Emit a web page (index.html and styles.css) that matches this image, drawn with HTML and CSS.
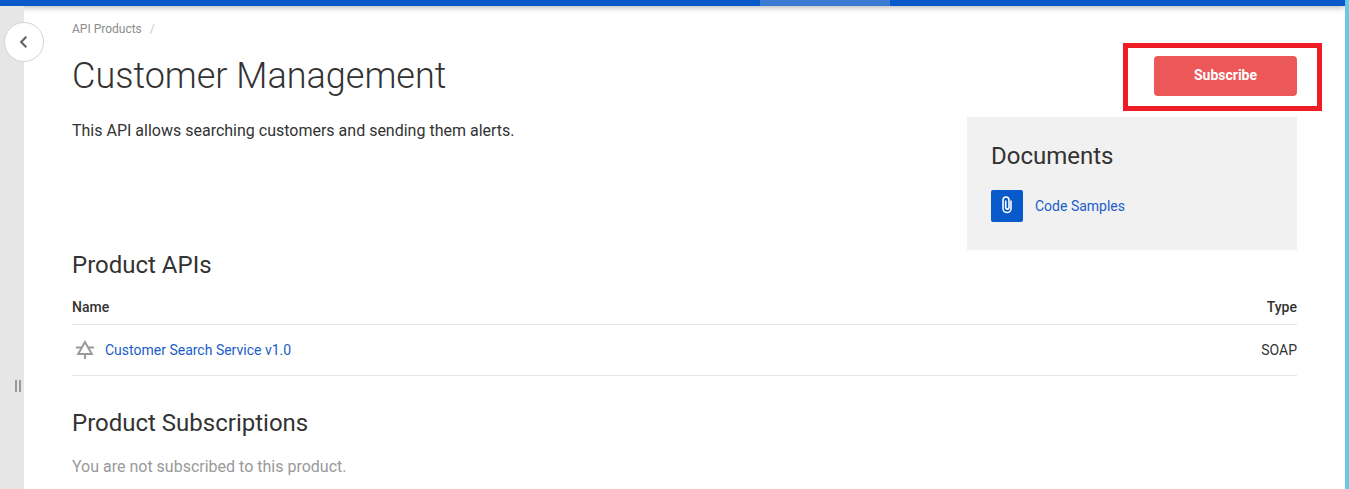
FILE: index.html
```html
<!DOCTYPE html>
<html lang="en">
<head>
    <meta charset="UTF-8">
    <meta name="viewport" content="width=device-width, initial-scale=1.0">
    <title>Customer Management</title>
    <link rel="stylesheet" href="styles.css">
</head>
<body>
    <header class="topbar">
        <div class="topbar-active"></div>
    </header>

    <div class="layout">
        <aside class="sidebar">
            <button class="sidebar-toggle" type="button" aria-label="Expand sidebar">
                <svg width="24" height="24" viewBox="0 0 24 24">
                    <path d="M14.3 6.8 L9.2 12 L14.3 17.2" fill="none" stroke="#666" stroke-width="2.2"/>
                </svg>
            </button>
            <div class="sidebar-grip"></div>
        </aside>

        <main class="content">
            <nav class="breadcrumb">
                <a href="#">API Products</a>
                <span class="separator">/</span>
            </nav>

            <div class="title-row">
                <h1>Customer Management</h1>
                <div class="subscribe">
                    <button class="subscribe-button" type="button">Subscribe</button>
                    <div class="highlight"></div>
                </div>
            </div>

            <div class="overview">
                <p class="description">This API allows searching customers and sending them alerts.</p>
                <section class="documents">
                    <h2>Documents</h2>
                    <a class="document" href="#">
                        <span class="document-icon">
                            <svg width="20" height="20" viewBox="0 0 20 20">
                                <path d="M14 5.500 V13.500 A4 4 0 0 1 6 13.500 V5 A3 3 0 0 1 12 5 V12.800 A1.700 1.700 0 0 1 8.700 12.800 V5.500" fill="none" stroke="#fff" stroke-width="1.600"/>
                            </svg>
                        </span>
                        Code Samples
                    </a>
                </section>
            </div>

            <section class="apis">
                <h2>Product APIs</h2>
                <table>
                    <thead>
                        <tr>
                            <th>Name</th>
                            <th class="type">Type</th>
                        </tr>
                    </thead>
                    <tbody>
                        <tr>
                            <td>
                                <a class="api-link" href="#">
                                    <svg width="20" height="20" viewBox="0 0 20 20" fill="none" stroke="#999" stroke-width="2">
                                        <path d="M10 2 L16.800 14 H3.200 Z"/>
                                        <path d="M1 7.500 H6.500 M13.500 7.500 H19 M10 14 V19"/>
                                    </svg>
                                    Customer Search Service v1.0
                                </a>
                            </td>
                            <td class="type">SOAP</td>
                        </tr>
                    </tbody>
                </table>
            </section>

            <section class="subscriptions">
                <h2>Product Subscriptions</h2>
                <p class="empty">You are not subscribed to this product.</p>
            </section>
        </main>
    </div>
</body>
</html>
```
FILE: styles.css
```css
:root {
    --primary-color: #0859c9;
    --link-color: #1a5dc8;
    --text-color: #333;
    --muted-color: #999;
    --line-color: #e6e6e6;
}

* {
    margin: 0;
    padding: 0;
    box-sizing: border-box;
}

body {
    display: flex;
    flex-direction: column;
    min-height: 100vh;
    border-right: 4px solid #66c9ea;
    background-color: #fff;
    color: var(--text-color);
    font-family: Roboto, sans-serif;
    font-size: 14px;
    line-height: 20px;
}

a {
    color: var(--link-color);
    text-decoration: none;
}

.topbar {
    position: relative;
    height: 6px;
    background-color: var(--primary-color);
    box-shadow: 0 1px 6px rgba(0, 0, 0, 0.35);
    display: flex;
    justify-content: center;
}

.topbar-active {
    width: 130px;
    margin-left: 305px;
    background-color: #3a7bd3;
}

.layout {
    display: flex;
    flex: 1;
}

.sidebar {
    position: relative;
    flex: 0 0 24px;
    background-color: #e6e6e6;
}

.sidebar-toggle {
    position: absolute;
    top: 16px;
    left: 4px;
    display: flex;
    align-items: center;
    justify-content: center;
    width: 40px;
    height: 40px;
    border: 1px solid #d4d4d4;
    border-radius: 50%;
    background-color: #fff;
    cursor: pointer;
}

.sidebar-grip {
    position: absolute;
    top: 374px;
    right: 3px;
    width: 6px;
    height: 12px;
    border: solid var(--muted-color);
    border-width: 0 2px;
}

.content {
    flex: 1;
    padding: 13px 48px 0;
}

.breadcrumb {
    display: flex;
    gap: 8px;
    font-size: 12px;
}

.breadcrumb a {
    color: #8c8c8c;
}

.separator {
    color: #ccc;
}

.title-row {
    display: flex;
    align-items: center;
    justify-content: space-between;
    height: 74px;
}

h1 {
    font-size: 36px;
    font-weight: 300;
    line-height: 48px;
}

h2 {
    font-size: 24px;
    font-weight: 400;
    line-height: 30px;
}

.subscribe {
    position: relative;
}

.subscribe-button {
    width: 143px;
    height: 40px;
    padding-bottom: 2px;
    border: none;
    border-radius: 4px;
    background-color: #ec5858;
    color: #fff;
    font-family: inherit;
    font-size: 14px;
    font-weight: 700;
    cursor: pointer;
}

.highlight {
    position: absolute;
    top: -13px;
    right: -25px;
    bottom: -15px;
    left: -31px;
    border: 5px solid #ee1c24;
    pointer-events: none;
}

.overview {
    display: flex;
    justify-content: space-between;
    margin-top: 4px;
}

.description {
    padding-top: 4px;
    font-size: 16px;
}

.documents {
    width: 330px;
    padding: 24px 24px 28px;
    background-color: #f1f1f1;
}

.document {
    display: flex;
    align-items: center;
    gap: 12px;
    margin-top: 19px;
}

.document-icon {
    display: flex;
    align-items: center;
    justify-content: center;
    width: 32px;
    height: 32px;
    padding-bottom: 2px;
    border-radius: 2px;
    background-color: var(--primary-color);
}

table {
    width: 100%;
    margin-top: 12px;
    border-collapse: collapse;
}

th {
    padding: 5px 0 7px;
    font-weight: 500;
    text-align: left;
}

td {
    padding: 15px 0;
}

th,
td {
    border-bottom: 1px solid var(--line-color);
}

.type {
    text-align: right;
}

.api-link {
    display: flex;
    align-items: center;
    gap: 10px;
    margin-left: 3px;
}

.subscriptions {
    margin-top: 32px;
}

.empty {
    margin-top: 19px;
    color: var(--muted-color);
    font-size: 16px;
}
```
